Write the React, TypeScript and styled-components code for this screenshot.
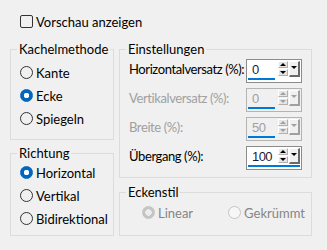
import styled, { createGlobalStyle } from "styled-components";

const GlobalStyle = createGlobalStyle`
  body {
    margin: 0;
    background: #f0f0f0;
    font-family: Lato, "Liberation Sans", sans-serif;
    font-size: 13px;
    color: #000;
  }
`;

type Setting = {
  label: string;
  value: string;
  disabled?: boolean;
  full?: boolean;
};

const settings: Setting[] = [
  { label: "Horizontalversatz (%):", value: "0" },
  { label: "Vertikalversatz (%):", value: "0", disabled: true },
  { label: "Breite (%):", value: "50", disabled: true },
  { label: "Übergang (%):", value: "100", full: true },
];

function Radio({ label, checked, disabled }: { label: string; checked?: boolean; disabled?: boolean }) {
  return (
    <RadioRow disabled={disabled}>
      <RadioCircle checked={checked} disabled={disabled} />
      {label}
    </RadioRow>
  );
}

function Spinner({ value, disabled, full }: { value: string; disabled?: boolean; full?: boolean }) {
  return (
    <SpinBox disabled={disabled}>
      <SpinTop>
        <SpinValue disabled={disabled}>{value}</SpinValue>
        <SpinButtons>
          <SpinButton>
            <Triangle up disabled={disabled} />
          </SpinButton>
          <SpinButton>
            <Triangle disabled={disabled} />
          </SpinButton>
        </SpinButtons>
        <DropButton disabled={disabled}>
          <Triangle disabled={disabled} />
        </DropButton>
      </SpinTop>
      <ValueBar full={full} />
    </SpinBox>
  );
}

export default function App() {
  return (
    <>
      <GlobalStyle />
      <Page>
        <CheckRow>
          <CheckBox />
          Vorschau anzeigen
        </CheckRow>
        <Columns>
          <Column>
            <Group height={99} width={104}>
              <Legend>Kachelmethode</Legend>
              <RadioList>
                <Radio label="Kante" />
                <Radio label="Ecke" checked />
                <Radio label="Spiegeln" />
              </RadioList>
            </Group>
            <Group height={91} width={104}>
              <Legend>Richtung</Legend>
              <RadioList flush>
                <Radio label="Horizontal" checked />
                <Radio label="Vertikal" />
                <Radio label="Bidirektional" />
              </RadioList>
            </Group>
          </Column>
          <Column wide>
            <Group height={137} width={193}>
              <Legend>Einstellungen</Legend>
              <SettingList>
                {settings.map((s) => (
                  <SettingRow key={s.label}>
                    <SettingLabel disabled={s.disabled}>{s.label}</SettingLabel>
                    <Spinner value={s.value} disabled={s.disabled} full={s.full} />
                  </SettingRow>
                ))}
              </SettingList>
            </Group>
            <Group height={52} width={193}>
              <Legend>Eckenstil</Legend>
              <InlineRadios>
                <Radio label="Linear" checked disabled />
                <Radio label="Gekrümmt" disabled />
              </InlineRadios>
            </Group>
          </Column>
        </Columns>
      </Page>
    </>
  );
}

const Page = styled.div`
  width: 327px;
  height: 250px;
  box-sizing: border-box;
  padding: 15px 0 0 10px;
`;

const CheckRow = styled.div`
  display: flex;
  align-items: center;
  gap: 3px;
  height: 13px;
  padding-left: 10px;
  margin-bottom: 13px;
  line-height: 16px;
`;

const CheckBox = styled.span`
  width: 13px;
  height: 13px;
  box-sizing: border-box;
  border: 1px solid #333;
  border-radius: 2px;
  flex-shrink: 0;
`;

const Columns = styled.div`
  display: flex;
  gap: 5px;
`;

const Column = styled.div<{ wide?: boolean }>`
  display: flex;
  flex-direction: column;
  gap: ${({ wide }) => (wide ? "6px" : "5px")};
`;

const Group = styled.fieldset<{ height: number; width: number }>`
  margin: 0;
  box-sizing: border-box;
  width: ${({ width }) => width}px;
  height: ${({ height }) => height}px;
  border: 1px solid #dcdcdc;
  padding: 0 0 0 9px;
  min-width: 0;
`;

const Legend = styled.legend`
  padding: 0 2px;
  margin-left: -3px;
  line-height: 16px;
`;

const RadioList = styled.div<{ flush?: boolean }>`
  display: flex;
  flex-direction: column;
  padding-top: ${({ flush }) => (flush ? "0" : "4px")};
`;

const RadioRow = styled.div<{ disabled?: boolean }>`
  display: flex;
  align-items: center;
  gap: 3px;
  height: 23px;
  line-height: 16px;
  white-space: nowrap;
  color: ${({ disabled }) => (disabled ? "#858585" : "#000")};
`;

const RadioCircle = styled.span<{ checked?: boolean; disabled?: boolean }>`
  width: 13px;
  height: 13px;
  box-sizing: border-box;
  border-radius: 50%;
  flex-shrink: 0;
  border: 1px solid
    ${({ checked, disabled }) => (disabled ? "#c4c4c4" : checked ? "#0067c0" : "#333")};
  background: ${({ checked, disabled }) =>
    checked
      ? disabled
        ? "radial-gradient(circle, #ececec 0 3px, #c4c4c4 3.5px)"
        : "radial-gradient(circle, #fff 0 2.5px, #0067c0 3px)"
      : disabled
      ? "#f6f6f6"
      : "transparent"};
`;

const SettingList = styled.div`
  display: flex;
  flex-direction: column;
  gap: 5px;
  padding: 2px 9px 0 0;
`;

const SettingRow = styled.div`
  display: grid;
  grid-template-columns: minmax(0, 1fr) 56px;
  align-items: center;
  height: 24px;
`;

const SettingLabel = styled.span<{ disabled?: boolean }>`
  line-height: 16px;
  padding-bottom: 5px;
  white-space: nowrap;
  letter-spacing: -0.4px;
  color: ${({ disabled }) => (disabled ? "#a0a0a0" : "#000")};
`;

const SpinBox = styled.div<{ disabled?: boolean }>`
  width: 56px;
  height: 24px;
  box-sizing: border-box;
  border: 1px solid ${({ disabled }) => (disabled ? "#b4b4b4" : "#8c8c8c")};
  background: ${({ disabled }) => (disabled ? "#f0f0f0" : "#fff")};
  padding: 1px 1px 2px 1px;
  display: flex;
  flex-direction: column;
`;

const SpinTop = styled.div`
  display: flex;
  height: 16px;
  gap: 1px;
`;

const SpinValue = styled.span<{ disabled?: boolean }>`
  flex: 1;
  padding-left: 4px;
  font-family: "Liberation Sans", Arial, sans-serif;
  font-size: 13px;
  letter-spacing: -0.6px;
  line-height: 18px;
  color: ${({ disabled }) => (disabled ? "#a0a0a0" : "#1a1a3a")};
`;

const SpinButtons = styled.div`
  display: flex;
  flex-direction: column;
  gap: 1px;
  width: 10px;
`;

const SpinButton = styled.span`
  height: 7px;
  box-sizing: border-box;
  background: #e6e6e6;
  border: 1px solid #fff;
  border-right-color: #b0b0b0;
  border-bottom-color: #b0b0b0;
  display: flex;
  align-items: center;
  justify-content: center;
`;

const DropButton = styled.span<{ disabled?: boolean }>`
  width: 11px;
  box-sizing: border-box;
  background: #f0f0f0;
  border: 1px solid #fff;
  border-right: 2px solid ${({ disabled }) => (disabled ? "#a0a0a0" : "#696969")};
  border-bottom: 2px solid ${({ disabled }) => (disabled ? "#a0a0a0" : "#696969")};
  display: flex;
  justify-content: center;
  padding-top: 4px;
`;

const Triangle = styled.span<{ up?: boolean; disabled?: boolean }>`
  width: 0;
  height: 0;
  border-left: 3px solid transparent;
  border-right: 3px solid transparent;
  ${({ up, disabled }) =>
    up
      ? `border-bottom: 3px solid ${disabled ? "#a0a0a0" : "#000"};`
      : `border-top: 3px solid ${disabled ? "#a0a0a0" : "#000"};`}
`;

const ValueBar = styled.span<{ full?: boolean }>`
  display: block;
  height: 3px;
  margin-top: 1px;
  width: ${({ full }) => (full ? "52px" : "27px")};
  background: #0078d7;
`;

const InlineRadios = styled.div`
  display: flex;
  gap: 35px;
  padding: 1px 0 0 13px;
`;
